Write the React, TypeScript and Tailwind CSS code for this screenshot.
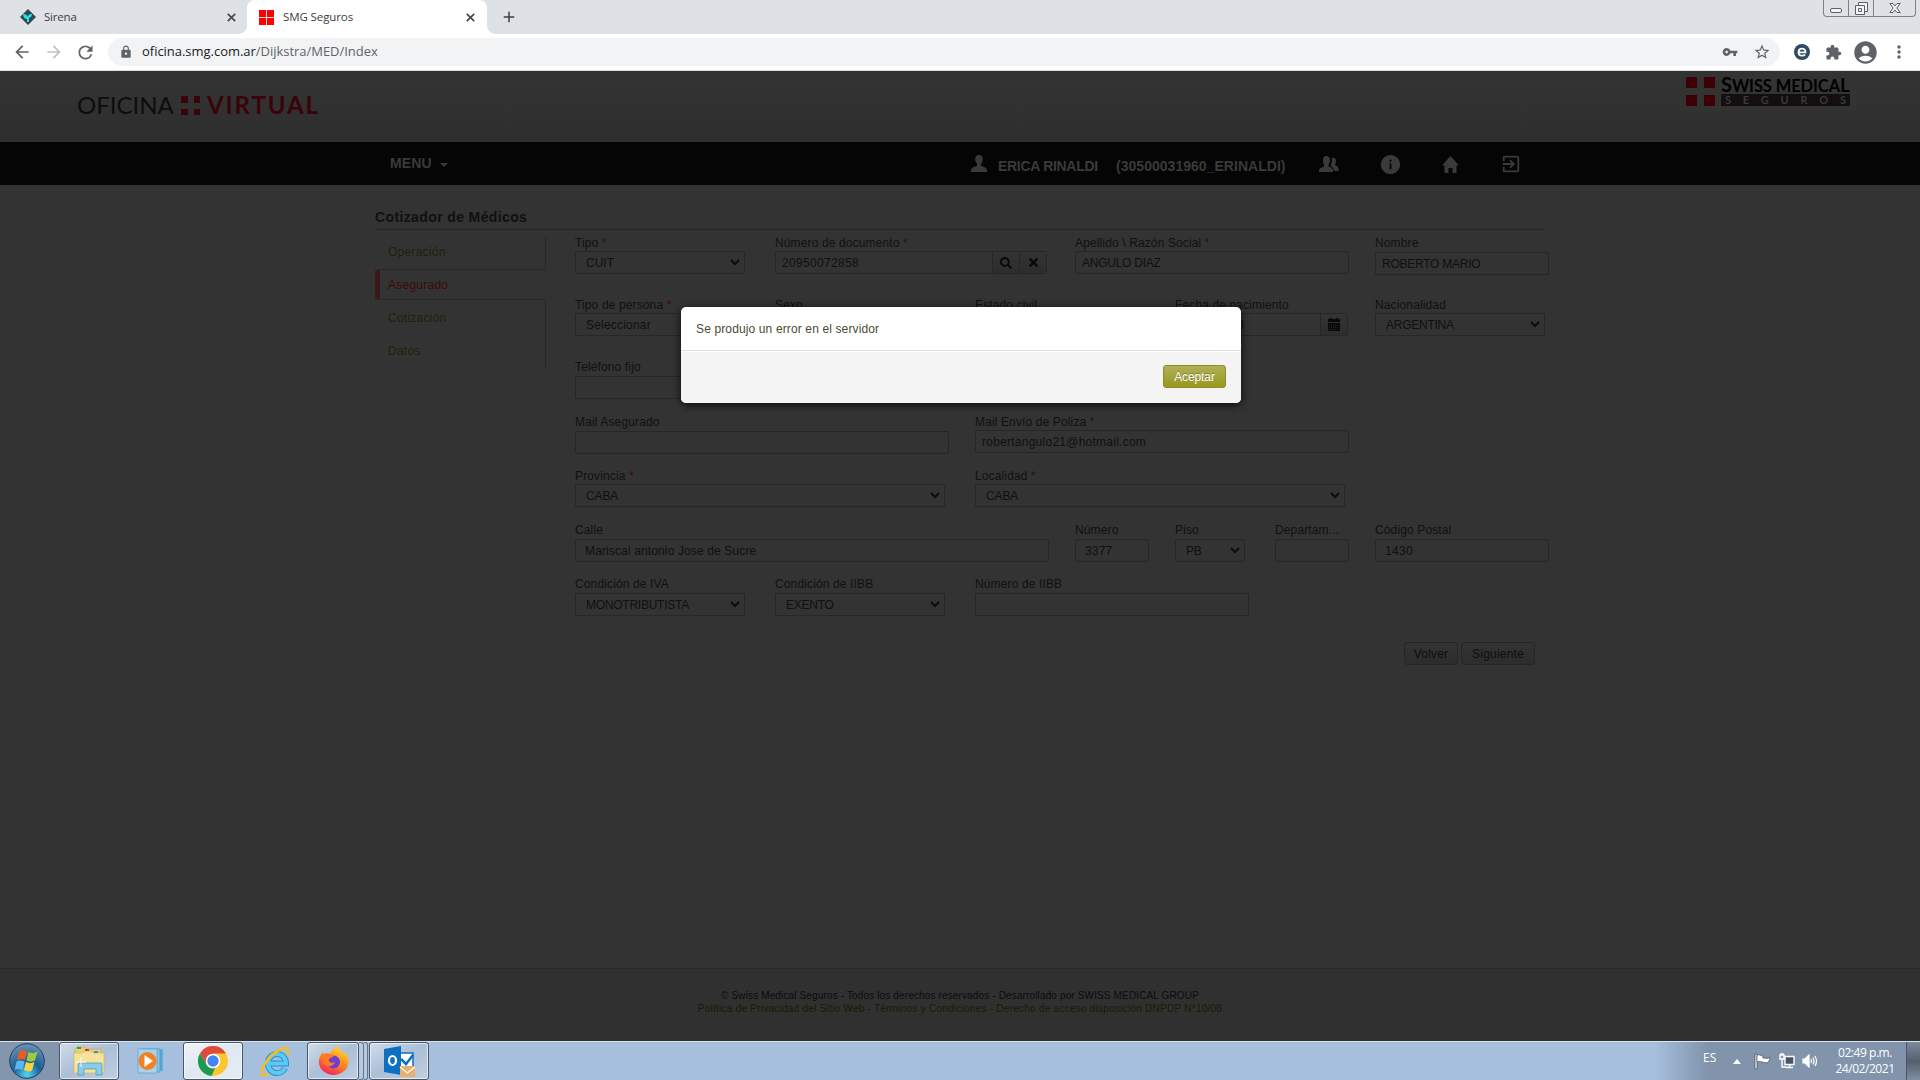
import React from "react";
import {
  MdArrowBack, MdArrowForward, MdRefresh, MdLock, MdVpnKey, MdStarBorder, MdExtension,
  MdAccountCircle, MdMoreVert, MdExitToApp, MdAdd, MdInfo,
} from "react-icons/md";
import { FaSearch, FaTimes } from "react-icons/fa";

const arial = "font-['Liberation_Sans',Arial,sans-serif]";

function TabClose() {
  return (
    <svg width="9" height="9" viewBox="0 0 9 9" stroke="#45494d" strokeWidth="1.7">
      <path d="M.8.8l7.400 7.400M8.200.8.8 8.200" />
    </svg>
  );
}

function BrowserTabs() {
  return (
    <div className="flex h-[34px] bg-[#dee1e6] text-[11.5px] text-[#3c4043] font-['Open_Sans',sans-serif]">
      <div className="flex w-[247px] items-center pl-5 pr-[11px]">
        <svg width="16" height="16" viewBox="0 0 16 16">
          <path d="M8 0 16 8 8 16 0 8Z" fill="#37474f" />
          <path d="M3 5c3 0 4 1 5 3 0-2 1-3 4-3 0 2-1 3-3 4v4H7v-3C5 10 3 8 3 5Z" fill="#1de9e4" />
        </svg>
        <span className="ml-2 flex-1 tracking-[-0.2px]">Sirena</span>
        <TabClose />
      </div>
      <div className="relative flex w-[240px] items-center rounded-t-lg bg-white pl-3 pr-[12px]">
        <div className="absolute bottom-0 -left-2 size-2 bg-[radial-gradient(circle_at_0_0,transparent_7.5px,white_8px)]" />
        <div className="absolute bottom-0 -right-2 size-2 bg-[radial-gradient(circle_at_100%_0,transparent_7.5px,white_8px)]" />
        <div className="grid size-[15px] grid-cols-2 gap-px bg-[#ddd]">
          <i className="bg-[#f00]" /><i className="bg-[#f00]" /><i className="bg-[#f00]" /><i className="bg-[#f00]" />
        </div>
        <span className="ml-[9px] flex-1 tracking-[-0.1px]">SMG Seguros</span>
        <TabClose />
      </div>
      <div className="flex flex-1 items-center pl-[13px]">
        <MdAdd className="size-[18px]" />
      </div>
      <div className="mr-1 flex h-[17px] w-[93px] rounded-b-[4px] border border-t-0 border-[#7d8187] text-[#5c6066]">
        <div className="flex w-[25px] items-end justify-center border-r border-[#7d8187] pb-[3px]">
          <div className="h-[5px] w-3 rounded-[2px] border border-[#5c6066] bg-[#f3f4f6]" />
        </div>
        <div className="flex w-[25px] items-center justify-center border-r border-[#7d8187]">
          <svg width="13" height="13" viewBox="0 0 13 13" fill="#f3f4f6" stroke="#5c6066">
            <path d="M3.5.5h9v9h-9z" /><path d="M.5 3.5h9v9h-9z" /><path d="M3.500 6.500h3v3h-3z" />
          </svg>
        </div>
        <div className="flex flex-1 items-center justify-center">
          <svg width="12" height="10" viewBox="0 0 12 10" fill="#f3f4f6" stroke="#5c6066">
            <path d="M.8.5H4L6 3 8 .5h3.200L7.800 5l3.400 4.500H8L6 7 4 9.500H.8L4.200 5Z" />
          </svg>
        </div>
      </div>
    </div>
  );
}

function AddressBar() {
  return (
    <div className="flex h-[37px] items-center border-b border-[#dadce0] bg-white font-['Open_Sans',sans-serif] text-[#5f6368]">
      <MdArrowBack className="ml-[12px] size-5" />
      <MdArrowForward className="ml-[12px] size-5 text-[#bdc1c6]" />
      <MdRefresh className="ml-[11px] size-[21px]" />
      <div className="ml-[12px] flex h-7 w-[1672px] items-center rounded-full bg-[#f1f3f4] pl-[11px] pr-[9px]">
        <MdLock className="size-[14px]" />
        <span className="ml-[9px] flex-1 text-[13px] tracking-[-0.03px]">
          <span className="text-[#202124]">oficina.smg.com.ar</span>/Dijkstra/MED/Index
        </span>
        <MdVpnKey className="mr-[15px] size-4" />
        <MdStarBorder className="size-[18px]" />
      </div>
      <svg className="ml-[14px]" width="16" height="16" viewBox="0 0 16 16">
        <circle cx="8" cy="8" r="8" fill="#2f4a63" />
        <path d="M4.500 8.300h7C11.600 6 10.200 4.600 8 4.600S4.500 6 4.500 8.200s1.500 3.500 3.600 3.500c1.300 0 2.300-.4 3-1.200" fill="none" stroke="#fff" strokeWidth="1.800" />
      </svg>
      <MdExtension className="ml-[15px] size-[17px]" />
      <MdAccountCircle className="ml-[10px] size-[27px]" />
      <MdMoreVert className="ml-[10px] size-5" />
    </div>
  );
}

function SiteHeader() {
  return (
    <header className="flex h-[71px] justify-between bg-linear-to-b from-[#343434] to-[#2e2e2e] font-[Lato,sans-serif]">
      <div className="ml-[77px] mt-[19px] flex h-[30px] items-center text-[24px] leading-[30px]">
        <span className="w-[104px] text-[#0d0d0d]">OFICINA</span>
        <div className="mt-px grid size-[19px] grid-cols-2 gap-[6px]">
          <i className="bg-[#390309]" /><i className="bg-[#390309]" /><i className="bg-[#390309]" /><i className="bg-[#390309]" />
        </div>
        <span className="ml-[7px] font-bold tracking-[1.9px] text-[#390309]">VIRTUAL</span>
      </div>
      <div className="mr-[64px] flex h-[40px] w-[176px] bg-[#333] pl-[6px] pt-[6px]">
        <div className="grid size-[29px] grid-cols-2 gap-[7px]">
          <i className="bg-[#3d0004]" /><i className="bg-[#3d0004]" /><i className="bg-[#3d0004]" /><i className="bg-[#3d0004]" />
        </div>
        <div className="ml-[6px] w-[129px]">
          <div className="h-[17px] whitespace-nowrap text-[16.500px] font-bold leading-[15px] tracking-[-0.1px] text-black">
            <span className="text-[20px]">S</span>WISS MEDICA<span className="text-[19px]">L</span>
          </div>
          <div className="flex h-3 items-center justify-between bg-[#130e10] px-1 text-[11px] font-bold text-[#3a3a3a]">
            {"SEGUROS".split("").map((c, i) => <span key={i}>{c}</span>)}
          </div>
        </div>
      </div>
    </header>
  );
}

function NavBar() {
  return (
    <nav className={`flex h-[43px] bg-[#050505] text-[14px] font-bold text-[#3a3a3a] ${arial}`}>
      <div className="ml-[390px] flex h-[43px] w-[580px] items-center pb-[1px]">
        <span className="tracking-[0.15px]">MENU</span>
        <svg className="ml-[8px] mt-[4px]" width="8" height="4"><path d="M0 0h8L4 4Z" fill="#3a3a3a" /></svg>
      </div>
      <div className="flex items-center pt-[5px] text-[14px]">
        <svg className="mb-[6px]" width="18" height="17" viewBox="0 0 18 18" fill="#3a3a3a">
          <path d="M9 0c3 0 4 2 4 4.500 0 2-1 4-2 5v2c2 1 6 2 6.500 4V18H.5v-2.500c.5-2 4.500-3 6.500-4v-2c-1-1-2-3-2-5C5 2 6 0 9 0Z" />
        </svg>
        <span className="ml-[10px] w-[118px] whitespace-nowrap tracking-[-0.3px]">ERICA RINALDI</span>
        <span className="w-[203px] whitespace-nowrap tracking-[0.03px]">(30500031960_ERINALDI)</span>
        <svg className="mb-[4px]" width="20" height="16" viewBox="0 0 20 16" fill="#3a3a3a">
          <path d="M13 2c2.500-1 4 .500 4 3 0 2-1 3-1 4 1 1 3.500 1.500 3.500 3v3H15c0-3-2-4-3.500-5 1-2 2-5 1.500-8Z" />
          <path d="M7.500 0C10 0 11 2 11 4c0 2-1 3.500-1.500 4.500v2c2 1 4.500 2 4.500 3.500v2H0v-2c0-1.500 3-2.500 5-3.500v-2C4.500 7.500 4 6 4 4c0-2 1-4 3.500-4Z" />
        </svg>
        <MdInfo className="mb-[4px] ml-[40px] size-[23px]" />
        <svg className="mb-[3px] ml-[40px]" width="17" height="17" viewBox="0 0 17 17" fill="#3a3a3a">
          <path d="M8.500 0 17 9.500h-2.500V17H10.500v-5h-4v5H2.500V9.500H0Z" />
        </svg>
        <MdExitToApp className="mb-[4px] ml-[41px] size-[22px]" />
      </div>
    </nav>
  );
}

function Label({ text, req }: { text: string; req?: boolean }) {
  return (
    <div className="h-[18px] whitespace-nowrap leading-[20px] tracking-[0.13px] text-[#11110d]">
      {text}{req && <span className="text-[#3a0a0d]"> *</span>}
    </div>
  );
}

const boxBase = "flex h-[23px] items-center rounded-[2px] border border-[#272727] whitespace-nowrap text-[#101010]";

function Field({ label, req, cls, down, kind = "input", value = "", pad = "pl-[6px]", track = "tracking-[0.2px]", children }: {
  label: string; req?: boolean; cls: string; down?: boolean; kind?: "input" | "select"; value?: string; pad?: string; track?: string; children?: React.ReactNode;
}) {
  return (
    <div className={cls}>
      <Label text={label} req={req} />
      <div className={`${boxBase} ${down ? "mt-px" : ""} ${kind === "select" ? "pl-[10px]" : pad}`}>
        <span className={`flex-1 pt-px leading-[21px] ${track}`}>{value}</span>
        {kind === "select" && (
          <svg className="mr-[4px]" width="10" height="7" viewBox="0 0 10 7" fill="none" stroke="#0c0c0c" strokeWidth="2">
            <path d="M1 1l4 4 4-4" />
          </svg>
        )}
        {children}
      </div>
    </div>
  );
}

const caps = "tracking-[-0.25px]";
const addon = "flex h-[21px] w-[27px] items-center justify-center border-l border-[#272727] bg-linear-to-b from-[#333] to-[#2d2d2d] text-[#090909]";

function Form() {
  return (
    <div className="w-[980px] text-[12px]">
      <div className="flex h-[62px] items-start">
        <Field label="Tipo" req cls="mr-[30px] w-[170px]" kind="select" value="CUIT" track="tracking-[0px]" />
        <Field label="Número de documento" req cls="mr-[28px] w-[272px]" value="20950072858" track="tracking-[0.33px]">
          <span className={addon}><FaSearch className="size-[12px]" /></span>
          <span className={addon}><FaTimes className="size-[13px]" /></span>
        </Field>
        <Field label="Apellido \ Razón Social" req cls="mr-[26px] w-[274px]" value="ANGULO DIAZ" track={caps} />
        <Field label="Nombre" cls="w-[174px]" down value="ROBERTO MARIO" track={caps} />
      </div>
      <div className="flex h-[62px] items-start">
        <Field label="Tipo de persona" req cls="mr-[30px] w-[170px]" kind="select" value="Seleccionar" />
        <Field label="Sexo" cls="mr-[30px] w-[170px]" kind="select" />
        <Field label="Estado civil" cls="mr-[30px] w-[170px]" kind="select" />
        <Field label="Fecha de nacimiento" cls="mr-[27px] w-[173px]" value="22/02/1978">
          <span className={addon}>
            <svg width="12" height="13" viewBox="0 0 12 13" fill="#090909">
              <path d="M0 1h12v3H0zM0 5h12v8H0z" /><path d="M2 0h2v2H2zM8 0h2v2H8z" />
              <path d="M1 7.500h10M1 9.500h10M1 11.500h10" stroke="#2d2d2d" strokeWidth=".8" strokeDasharray="1 1" />
            </svg>
          </span>
        </Field>
        <Field label="Nacionalidad" cls="w-[170px]" kind="select" value="ARGENTINA" track={caps} />
      </div>
      <div className="flex h-[55px] items-start">
        <Field label="Teléfono fijo" cls="w-[174px]" down />
      </div>
      <div className="flex h-[54px] items-start">
        <Field label="Mail Asegurado" cls="mr-[26px] w-[374px]" down />
        <Field label="Mail Envío de Poliza" req cls="w-[374px]" value="robertangulo21@hotmail.com" track="tracking-[0.25px]" />
      </div>
      <div className="flex h-[54px] items-start">
        <Field label="Provincia" req cls="mr-[30px] w-[370px]" kind="select" value="CABA" track="tracking-[-0.1px]" />
        <Field label="Localidad" req cls="w-[370px]" kind="select" value="CABA" track="tracking-[-0.1px]" />
      </div>
      <div className="flex h-[54px] items-start">
        <Field label="Calle" cls="mr-[26px] w-[474px]" down pad="pl-[9px]" value="Mariscal antonio Jose de Sucre" track="tracking-[0.13px]" />
        <Field label="Número" cls="mr-[26px] w-[74px]" down pad="pl-[9px]" value="3377" />
        <Field label="Piso" cls="mr-[30px] w-[70px]" down kind="select" value="PB" track={caps} />
        <Field label="Departam..." cls="mr-[26px] w-[74px]" down />
        <Field label="Código Postal" cls="w-[174px]" down pad="pl-[9px]" value="1430" track="tracking-[0.3px]" />
      </div>
      <div className="flex h-[68px] items-start">
        <Field label="Condición de IVA" cls="mr-[30px] w-[170px]" down kind="select" value="MONOTRIBUTISTA" track={caps} />
        <Field label="Condición de IIBB" cls="mr-[30px] w-[170px]" down kind="select" value="EXENTO" track={caps} />
        <Field label="Número de IIBB" cls="w-[274px]" down />
      </div>
      <div className="ml-[829px] flex gap-[3px] tracking-[0.2px] text-[#0e0e0e]">
        <span className="flex h-[23px] w-[54px] items-center justify-center rounded-[3px] border border-[#262626] bg-linear-to-b from-[#333] to-[#2d2d2d]">Volver</span>
        <span className="flex h-[23px] w-[74px] items-center justify-center rounded-[3px] border border-[#262626] bg-linear-to-b from-[#333] to-[#2d2d2d]">Siguiente</span>
      </div>
    </div>
  );
}

function SideTabs() {
  return (
    <div className="mt-[3px] w-[171px] text-[12px] leading-[32px] tracking-[0.25px] text-[#1f2208]">
      <div className="h-[34px] border-b border-r border-[#292929] pl-[13px]">Operación</div>
      <div className="flex h-[29px] items-center text-[#3a0a0d]">
        <span className="h-[29px] w-[5px] rounded-l-[3px] bg-[#3c1717]" />
        <span className="ml-[8px]">Asegurado</span>
      </div>
      <div className="h-[69px] border-r border-t border-[#292929] pl-[13px]">
        <div className="mt-px h-[33px] leading-[34px]">Cotización</div>
        <div className="leading-[34px]">Datos</div>
      </div>
    </div>
  );
}

function Modal() {
  return (
    <div className="absolute left-[681px] top-[307px] h-[96px] w-[560px] overflow-hidden rounded-[5px] bg-white text-[12px] tracking-[0.13px] shadow-[0_2px_8px_rgba(0,0,0,0.8)]">
      <div className="h-[44px] border-b border-[#ddd] pl-[15px] leading-[44px] text-[#4a4a35]">Se produjo un error en el servidor</div>
      <div className="mt-px flex h-[51px] items-start justify-end bg-[#f4f4f4] pr-[15px] pt-[13px]">
        <button className="h-[23px] w-[63px] rounded-[3px] border border-[#8c8c2b] bg-linear-to-b from-[#b1b055] to-[#97981b] leading-[20px] tracking-[-0.1px] text-white [text-shadow:0_-1px_0_rgba(0,0,0,0.25)]">Aceptar</button>
      </div>
    </div>
  );
}

function Footer() {
  return (
    <footer className="h-[73px] border-t border-[#2a2a2a] bg-[#303030] pt-[20px] text-center text-[10px] leading-[13px] text-[#0b0b0b]">
      <div className="tracking-[0.14px]">© Swiss Medical Seguros - Todos los derechos reservados - Desarrollado por SWISS MEDICAL GROUP</div>
      <div className="tracking-[0.25px] text-[#191b02]">
        Política de Privacidad del Sitio Web - Términos y Condiciones - Derecho de acceso disposición DNPDP N°10/08
      </div>
    </footer>
  );
}

const taskBtn = "flex h-[38px] items-center justify-center rounded-[3px] border border-[#46576b] bg-linear-to-br shadow-[inset_0_0_0_1px_rgba(255,255,255,0.6)]";
const idle = "from-[#d0dce9] via-[#abbfd7] to-[#bfcfe1]";
const active = "from-[#f0f4f8] via-[#dfe7f0] to-[#e6edf4]";

function Taskbar() {
  return (
    <div className="flex h-[39px] border-t border-[#d6e4f2] bg-[#a5bfdd]">
      <div className="flex w-[59px] items-center bg-[#8396ad] pl-[9px]">
        <svg width="36" height="36" viewBox="0 0 36 36">
          <defs>
            <radialGradient id="orb" cx=".5" cy=".9" r=".9">
              <stop offset="0" stopColor="#4fd8f5" /><stop offset=".45" stopColor="#1b5f94" /><stop offset="1" stopColor="#6f93b4" />
            </radialGradient>
          </defs>
          <circle cx="18" cy="18" r="17.300" fill="url(#orb)" stroke="#1f3f5e" />
          <path d="M10 8.500c3-2 5-1 8 0l-2 8.500c-2-1-5-1.500-8 0Z" fill="#ee5a24" />
          <path d="M19.500 9c3 1.500 5 1.500 9-.500l-2.500 9c-3 1.500-5 1.500-8.500 0Z" fill="#9ccb3f" />
          <path d="M7.500 18.500c3-1.500 5-1 8 0l-2 8.500c-2-1-5-1.500-8 0Z" fill="#5cb5ee" />
          <path d="M17 19c3 1.500 5 1.500 8.500 0l-2.500 8.500c-3 1.500-5 1-8-.500Z" fill="#fdd23f" />
        </svg>
      </div>
      <div className={`w-[60px] ${taskBtn} ${idle}`}>
        <svg width="32" height="30" viewBox="0 0 32 30">
          <path d="M2 3 4 1h8l2 2h14v22H2Z" fill="#e8cf7a" stroke="#c7a54a" strokeWidth=".7" />
          <path d="M1 7h9l1-2h8l1 2h11v20H1Z" fill="#f5e39c" stroke="#d3b65c" strokeWidth=".7" />
          <path d="M4 2h4" stroke="#1eaa3c" strokeWidth="2" /><path d="M12 4h4" stroke="#d8412f" strokeWidth="2" /><path d="M21 6h4" stroke="#2f8fe0" strokeWidth="2" />
          <path d="M5 29V19q0-2 2-2h20q2 0 2 2v10h-6v-6H11v6Z" fill="#8ccbe8" stroke="#4d9cc4" strokeWidth=".8" />
          <path d="M8 11v10M3 16h10" stroke="#fff" strokeWidth=".9" />
        </svg>
      </div>
      <div className="flex w-[64px] items-center pl-[18px]">
        <svg width="30" height="26" viewBox="0 0 30 26">
          <path d="M8 1h18v22H8z" fill="#5ba6d2" stroke="#8cc4e4" strokeWidth=".7" />
          <path d="M4 1h19v23H4z" fill="#83c0e2" stroke="#4b96c2" strokeWidth=".7" />
          <path d="M1 1h19v24H1z" fill="#a5d2ec" stroke="#5aa3cc" strokeWidth=".7" />
          <circle cx="10.500" cy="13" r="9" fill="#f28221" /><path d="M7.500 7l8.500 6-8.500 6Z" fill="#fff" />
        </svg>
      </div>
      <div className={`w-[60px] ${taskBtn} ${active}`}>
        <svg width="30" height="30" viewBox="0 0 30 30">
          <circle cx="15" cy="15" r="15" fill="#fbc72f" />
          <path d="M2 7.500A15 15 0 0 1 28 7.500H15L8.500 18.700Z" fill="#dd4b3e" />
          <path d="M2 7.500 8.500 18.700A7.500 7.500 0 0 0 17 22L13.500 30A15 15 0 0 1 2 7.500Z" fill="#1b9a55" />
          <circle cx="15" cy="15" r="7.300" fill="#fff" /><circle cx="15" cy="15" r="5.700" fill="#4285f4" />
        </svg>
      </div>
      <div className="flex w-[64px] items-center pl-[17px]">
        <svg width="31" height="31" viewBox="0 0 31 31" fill="none">
          <path d="M9 17.500h17C26 12 22 8 17 8s-9 4-9 9.500S12 27 17 27c3.500 0 6.500-2 8-5" stroke="#1a93d4" strokeWidth="6" />
          <path d="M9 17.500h17C26 12 22 8 17 8s-9 4-9 9.500S12 27 17 27c3.500 0 6.500-2 8-5" stroke="#5fc8f2" strokeWidth="4" />
          <path d="M27.500 9c2-5 0-8.500-5-6.500C13 6 2 18 2 26c0 4 3 4.500 7 2" stroke="#f5bd1f" strokeWidth="2.500" />
        </svg>
      </div>
      <div className={`w-[52px] ${taskBtn} ${idle}`}>
        <svg width="31" height="31" viewBox="0 0 31 31">
          <defs>
            <linearGradient id="ff" x1=".8" y1="0" x2=".3" y2="1">
              <stop offset="0" stopColor="#ffe03a" /><stop offset=".5" stopColor="#ff8a1c" /><stop offset="1" stopColor="#f3235f" />
            </linearGradient>
          </defs>
          <path d="M20 0c1 4 4 5 6 8l1-2c3 4 4 7 3.500 11A15 14 0 0 1 .8 17C.8 12 2 9 5 6l1 3c2-1 4-1 6-1 1-4 5-6 8-8Z" fill="url(#ff)" />
          <circle cx="15.500" cy="16" r="6.500" fill="#6b3fd0" />
          <path d="M5 8c4-2 9 0 11 2l-5 3c-1 3 3 5 6 3-1 3-4 5-8 4C4 18 3 12 5 8Z" fill="#ff7a20" />
        </svg>
      </div>
      <div className="mr-[1px] flex">
        <div className="h-[38px] w-[5px] rounded-r-[3px] border-y border-r border-[#60758d] bg-[#b9cade]" />
        <div className="h-[38px] w-[4px] rounded-r-[3px] border-y border-r border-[#60758d] bg-[#b9cade]" />
      </div>
      <div className={`w-[60px] ${taskBtn} ${idle}`}>
        <svg width="32" height="32" viewBox="0 0 32 32">
          <path d="M16 8h14v15H16z" fill="#fff" stroke="#0f6fc0" strokeWidth="1.500" /><path d="M18 14l5 5 7-9" fill="none" stroke="#0f6fc0" strokeWidth="2.500" />
          <path d="M1 4 18 1v29L1 27Z" fill="#0f6fc0" />
          <ellipse cx="9.500" cy="15.500" rx="3.500" ry="4.500" fill="none" stroke="#fff" strokeWidth="2.200" />
          <path d="M17 21h15v11H17z" fill="#e9b06d" /><path d="M17 22l7.500 6 7.500-6" fill="none" stroke="#fff" strokeWidth="1.300" />
        </svg>
      </div>
      <div className="flex-1" />
      <div className="flex w-[265px] items-center bg-linear-to-r from-[#a5bfdd] to-[#8194ab] to-20% pl-[48px] text-white font-['Open_Sans',sans-serif]">
        <span className="mb-[6px] w-[30px] text-[12px]">ES</span>
        <svg width="8" height="5"><path d="M0 5 4 0l4 5Z" fill="#fff" /></svg>
        <svg className="ml-[13px]" width="17" height="17" viewBox="0 0 17 17" fill="#fff" stroke="#3c4a5b" strokeWidth=".7">
          <path d="M1 1h2v15H1z" /><path d="M3 2c3-1 4 1 6 1v2c2 0 4 1 7-.500-.5 3-1.500 4-2 5-3 1-4-.5-6-.500-2-.5-3-1-5 0Z" />
        </svg>
        <svg className="ml-[8px]" width="16" height="16" viewBox="0 0 16 16" fill="none" stroke="#fff" strokeWidth="1.400">
          <path d="M6 3.500h9v8H6z" fill="#44546a" /><path d="M7 14.500h7M10.500 12v2M1 2h4v4H1zM2 0v2M4 0v2M3 6v8h4" />
        </svg>
        <svg className="ml-[7px]" width="16" height="14" viewBox="0 0 16 14" fill="none" stroke="#fff" strokeWidth="1.200">
          <path d="M1 5h2l4-4v12L3 9H1z" fill="#fff" /><path d="M9 5q1 2 0 4M11 3.500q2 3.500 0 7M13 2q3 5 0 10" />
        </svg>
        <div className="ml-[16px] w-[62px] text-center text-[12px] leading-[16px] tracking-[-0.45px]">
          <div>02:49 p.m.</div>
          <div>24/02/2021</div>
        </div>
        <div className="ml-auto h-[39px] w-[14px] border-l border-[#4a5668] bg-linear-to-b from-[#7d8a9b] via-[#56616f] to-[#8291a5]" />
      </div>
    </div>
  );
}

export default function App() {
  return (
    <div className="relative flex h-[1080px] w-[1920px] flex-col overflow-hidden bg-[#333]">
      <BrowserTabs />
      <AddressBar />
      <SiteHeader />
      <NavBar />
      <main className={`flex-1 pl-[375px] pt-[20px] ${arial}`}>
        <h1 className="h-[25px] w-[1170px] border-b border-[#272727] text-[14px] font-bold leading-[24px] tracking-[0.38px] text-[#101010]">Cotizador de Médicos</h1>
        <div className="mt-[3px] flex gap-[29px]">
          <SideTabs />
          <Form />
        </div>
      </main>
      <div className={arial}><Footer /></div>
      <Taskbar />
      <div className={arial}><Modal /></div>
    </div>
  );
}
